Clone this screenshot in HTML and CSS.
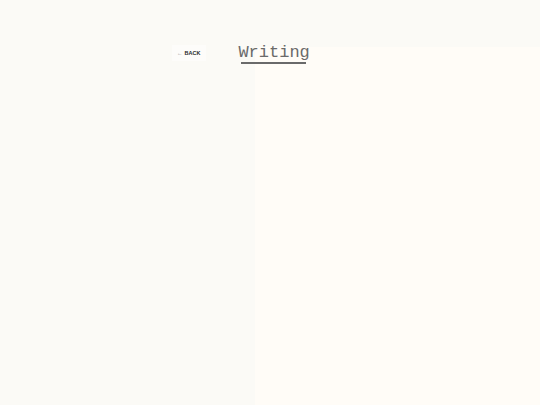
FILE: index.html
```html
<!DOCTYPE html>
<html lang="en">
<head>
    <meta charset="UTF-8">
    <meta name="viewport" content="width=device-width, initial-scale=1.0">
    <title>Writing</title>
    <link rel="stylesheet" href="styles.css">
</head>
<body>

    <div class="page">
        <!-- Top bar: back link and page title -->
        <header class="top">
            <a class="back" href="#"><span class="arrow">&larr;</span> BACK</a>
            <h1 class="title"><span>Writing</span></h1>
        </header>

        <!-- Writing sheet -->
        <main class="sheet"></main>
    </div>

</body>
</html>
```

FILE: styles.css
```css
html, body {
    margin: 0;
    height: 100%;
}
body {
    background: #fbfaf6;
    font-family: 'Liberation Sans', Arial, sans-serif;
}
.page {
    display: grid;
    min-height: 100%;
}
.top,
.sheet {
    grid-area: 1 / 1;
}
.top {
    display: flex;
    align-items: flex-start;
    padding: 44px 0 0 172px;
    z-index: 1;
}
.back {
    display: flex;
    align-items: center;
    gap: 2px;
    height: 16px;
    margin-top: 1px;
    padding: 0 6px 0 5px;
    background: #fdfcfa;
    color: #2a2a2a;
    font-size: 5.5px;
    font-weight: bold;
    text-decoration: none;
}
.back .arrow {
    color: #999;
    font-weight: normal;
}
.title {
    margin: 0 0 0 32px;
    font-family: 'Liberation Mono', 'Courier New', monospace;
    font-size: 17px;
    font-weight: normal;
    line-height: 18px;
    color: #6a6a6a;
}
.title span {
    display: inline-block;
    padding-bottom: 2px;
    background-image: linear-gradient(#6a6a6a, #6a6a6a);
    background-size: calc(100% - 7px) 2px;
    background-position: 3px 100%;
    background-repeat: no-repeat;
}
.sheet {
    margin: 47px 0 0 255px;
    background: #fffcf7;
}
```
